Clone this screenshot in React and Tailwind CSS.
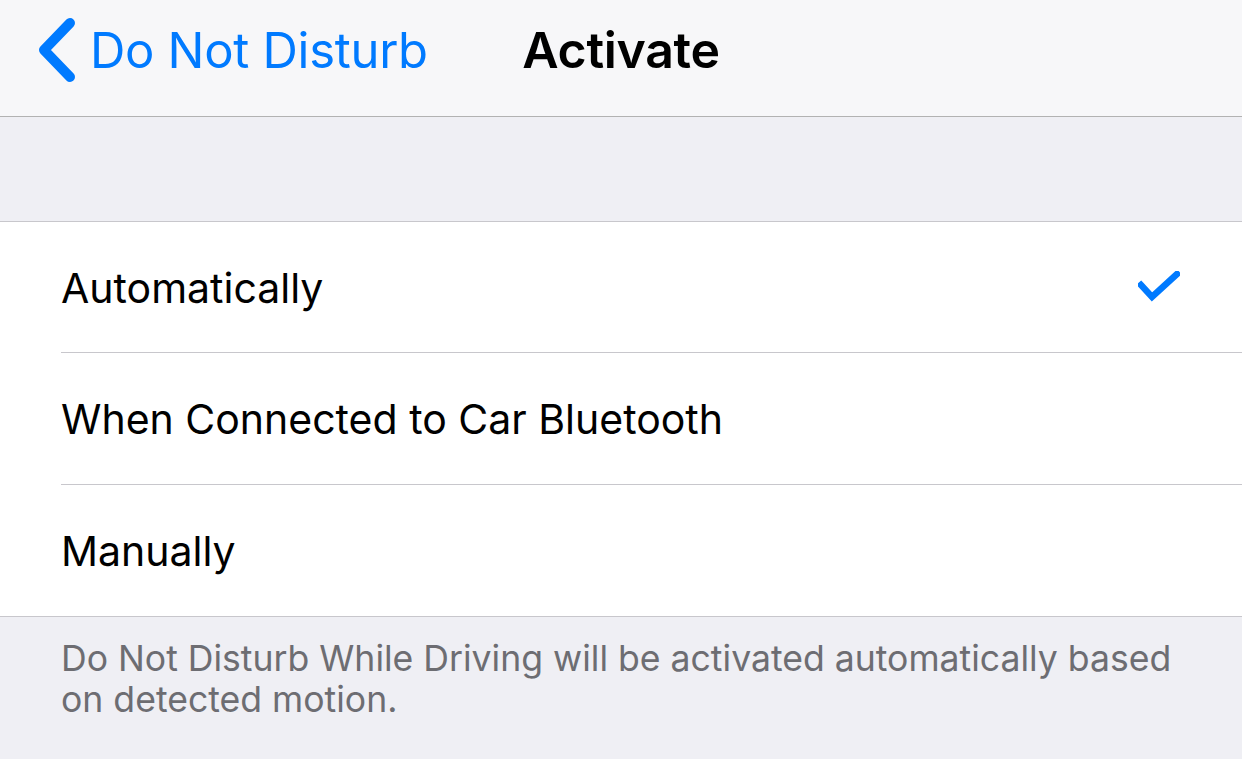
const ROWS = [
  { label: "Automatically", checked: true, h: "h-[131px]" },
  { label: "When Connected to Car Bluetooth", h: "h-[132px]" },
  { label: "Manually", last: true, h: "h-[131px]" },
];

function BackChevron() {
  return (
    <svg width="40" height="64" viewBox="0 0 40 64" fill="none" className="shrink-0">
      <path d="M34 5 L8 32 L34 59" stroke="#007aff" strokeWidth="10" strokeLinecap="round" strokeLinejoin="round" />
    </svg>
  );
}

function Check() {
  return (
    <svg width="42" height="32" viewBox="0 0 42 32" fill="none">
      <path d="M3 14 L14 26 L39 3" stroke="#007aff" strokeWidth="6.5" strokeLinecap="square" />
    </svg>
  );
}

export default function App() {
  return (
    <div
      className="w-[1242px] h-[759px] overflow-hidden bg-[#efeff4] flex flex-col"
      style={{ fontFamily: "Inter, 'Noto Sans', sans-serif" }}
    >
      {/* nav bar */}
      <div className="h-[117px] shrink-0 bg-[#f7f7f9] border-b border-[#b2b2b2] pb-[16px]">
        <div className="h-full grid grid-cols-[1fr_auto_1fr] items-center">
          <div className="flex items-center pl-[36px] gap-[14px] text-[#007aff]">
            <BackChevron />
            <span className="text-[49px] leading-none tracking-[-0.3px]">Do Not Disturb</span>
          </div>
          <div className="text-[50px] leading-none font-semibold text-black tracking-[-0.3px]">Activate</div>
          <div />
        </div>
      </div>

      {/* group spacer */}
      <div className="h-[104px] shrink-0" />

      {/* options */}
      <div className="bg-white border-t border-b border-[#c8c7cc]">
        {ROWS.map((row) => (
          <div key={row.label} className="pl-[61px]">
            <div
              className={`${row.h} flex items-center justify-between pr-[62px] ${
                row.last ? "" : "border-b border-[#c8c7cc]"
              }`}
            >
              <span className="text-[41px] text-black leading-none translate-y-[1px]">{row.label}</span>
              {row.checked && <Check />}
            </div>
          </div>
        ))}
      </div>

      {/* footer */}
      <div className="pl-[61px] pr-[40px] pt-[21px] text-[35.6px] leading-[41px] text-[#6d6d72]">
        Do Not Disturb While Driving will be activated automatically based on detected motion.
      </div>
    </div>
  );
}
